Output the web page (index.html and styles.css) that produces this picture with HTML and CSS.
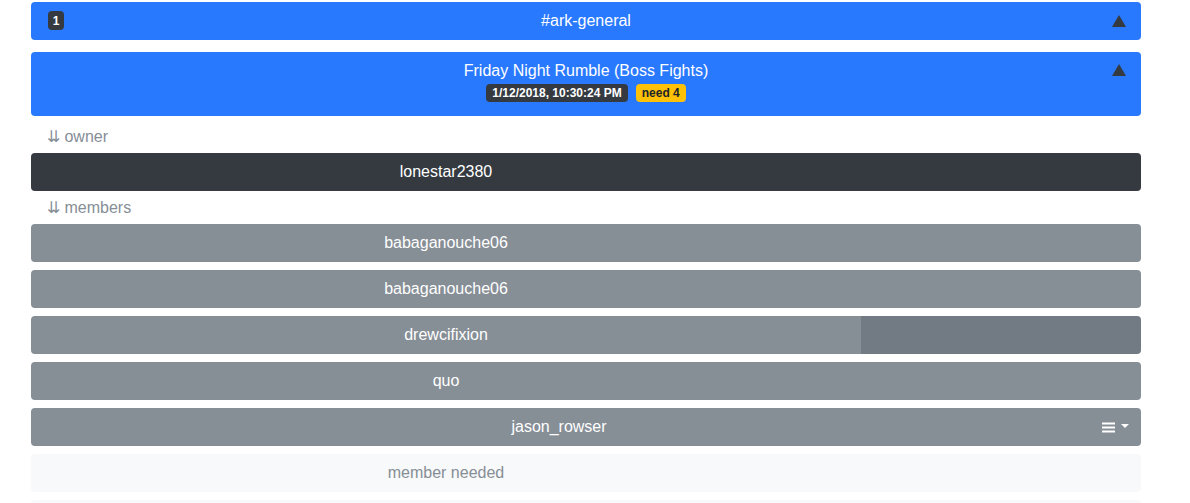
FILE: index.html
```html
<!DOCTYPE html>
<html>
<head>
<meta charset="utf-8">
<link rel="stylesheet" href="styles.css">
</head>
<body>
<div class="container">
  <div class="bar bar-primary channel">
    <span class="badge badge-dark count">1</span>
    <span class="bar-title">#ark-general</span>
    <span class="caret-up"></span>
  </div>
  <div class="event">
    <div class="event-title">Friday Night Rumble (Boss Fights)</div>
    <div class="event-badges">
      <span class="badge badge-dark">1/12/2018, 10:30:24 PM</span>
      <span class="badge badge-warning">need 4</span>
    </div>
    <span class="caret-up event-caret"></span>
  </div>
  <div class="label">&#8650; owner</div>
  <div class="row owner">
    <div class="btn btn-dark main">lonestar2380</div>
    <div class="btn btn-dark side"></div>
  </div>
  <div class="label">&#8650; members</div>
  <div class="row">
    <div class="btn btn-gray main">babaganouche06</div>
    <div class="btn btn-gray side"></div>
  </div>
  <div class="row">
    <div class="btn btn-gray main">babaganouche06</div>
    <div class="btn btn-gray side"></div>
  </div>
  <div class="row">
    <div class="btn btn-gray main">drewcifixion</div>
    <div class="btn btn-gray-dark side"></div>
  </div>
  <div class="row">
    <div class="btn btn-gray main">quo</div>
    <div class="btn btn-gray side"></div>
  </div>
  <div class="row">
    <div class="btn btn-gray main wide">jason_rowser</div>
    <div class="btn btn-gray toggle">
      <svg width="14" height="11" viewBox="0 0 14 11"><rect x="0" y="0.5" width="13" height="2" fill="#fff"/><rect x="0" y="4.5" width="13" height="2" fill="#fff"/><rect x="0" y="8.5" width="13" height="2" fill="#fff"/></svg>
      <span class="caret-down"></span>
    </div>
  </div>
  <div class="row">
    <div class="btn btn-light main">member needed</div>
    <div class="btn btn-light side"></div>
  </div>
  <div class="row">
    <div class="btn btn-light main">member needed</div>
    <div class="btn btn-light side"></div>
  </div>
</div>
</body>
</html>
```
FILE: styles.css
```css
html, body {
  margin: 0;
  padding: 0;
  background: #fff;
  font-family: "Liberation Sans", Arial, Helvetica, sans-serif;
  font-size: 16px;
  line-height: 24px;
  overflow: hidden;
}
.container {
  width: 1110px;
  margin: 0 0 0 31px;
  padding-top: 2px;
  display: flex;
  flex-direction: column;
}
.bar {
  position: relative;
  height: 38px;
  border-radius: 4px;
  display: flex;
  align-items: center;
  justify-content: center;
  color: #fff;
}
.bar-primary { background: #2979ff; }
.channel { margin-bottom: 12px; }
.badge {
  display: inline-block;
  font-size: 12px;
  font-weight: bold;
  line-height: 18px;
  padding: 0 6px;
  border-radius: 4px;
}
.badge-dark { background: #343a40; color: #fff; }
.badge-warning { background: #ffc107; color: #212529; }
.count {
  position: absolute;
  left: 17px;
  top: 9px;
  width: 16px;
  height: 19px;
  padding: 0;
  display: flex;
  align-items: center;
  justify-content: center;
  border-radius: 4px;
  box-sizing: border-box;
}
.caret-up {
  position: absolute;
  right: 15px;
  top: 13px;
  width: 0;
  height: 0;
  border-left: 7px solid transparent;
  border-right: 7px solid transparent;
  border-bottom: 12px solid #343a40;
}
.event {
  position: relative;
  background: #2979ff;
  border-radius: 4px;
  height: 64px;
  margin-bottom: 4px;
  display: flex;
  flex-direction: column;
  align-items: center;
  color: #fff;
  padding-top: 7px;
  box-sizing: border-box;
}
.event-caret { top: 12px; }
.event-title { line-height: 24px; }
.event-badges {
  display: flex;
  gap: 8px;
  margin-top: 1px;
}
.label {
  height: 33px;
  line-height: 33px;
  color: #868e96;
  padding-left: 16px;
}
.row {
  display: flex;
  height: 38px;
  margin-bottom: 8px;
}
.row.owner { margin-bottom: 0; }
.btn {
  height: 38px;
  display: flex;
  align-items: center;
  justify-content: center;
  color: #fff;
}
.main {
  flex: 0 0 830px;
  border-radius: 4px 0 0 4px;
}
.main.wide { flex: 1 1 auto; }
.side {
  flex: 1 1 auto;
  border-radius: 0 4px 4px 0;
}
.toggle {
  flex: 0 0 54px;
  border-radius: 0 4px 4px 0;
  gap: 5px;
  justify-content: flex-start;
  padding-left: 15px;
  box-sizing: border-box;
}
.caret-down {
  width: 0;
  height: 0;
  border-left: 4px solid transparent;
  border-right: 4px solid transparent;
  border-top: 4px solid #fff;
  margin-top: -3px;
}
.btn-dark { background: #343a40; }
.btn-gray { background: #868e96; }
.btn-gray-dark { background: #727b84; }
.btn-light { background: #f8f9fa; color: #868e96; }
```
